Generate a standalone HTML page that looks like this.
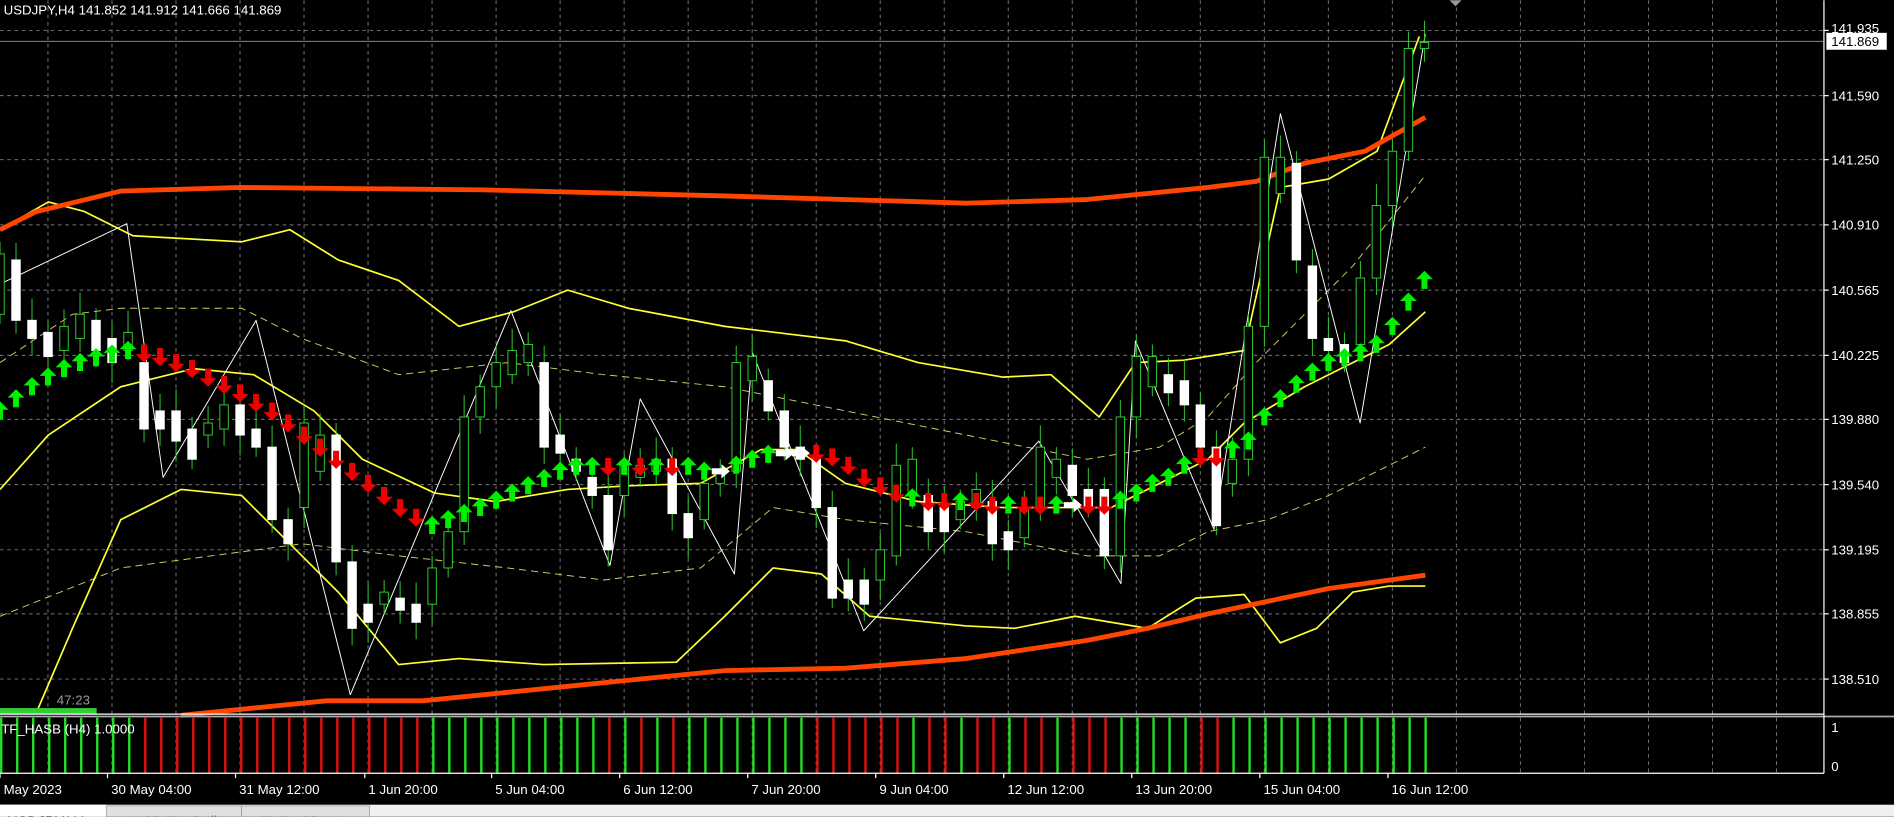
<!DOCTYPE html>
<html><head><meta charset="utf-8"><style>
html,body{margin:0;padding:0;background:#000;overflow:hidden;width:1894px;height:817px}
svg{display:block}
text{font-family:"Liberation Sans",Tahoma,sans-serif}
</style></head><body>
<svg id="s" width="1894" height="817" viewBox="0 0 1568 676" xmlns="http://www.w3.org/2000/svg">
<rect width="1568" height="676" fill="#000"/>
<g id="grid"></g>
<g id="lines"></g>
<g id="candles"></g>
<g id="arrows"></g>
<g id="ind"></g>
<g id="axis"></g>
</svg>
<script>
const NS="http://www.w3.org/2000/svg";
function el(p,t,a,txt){const e=document.createElementNS(NS,t);for(const k in a)e.setAttribute(k,a[k]);if(txt!==undefined)e.textContent=txt;document.getElementById(p).appendChild(e);return e;}
for(let x=39.7;x<1510;x+=53){el('grid','line',{x1:x,y1:0,x2:x,y2:591,stroke:'#777','stroke-width':0.8,'stroke-dasharray':'3,3'});el('grid','line',{x1:x,y1:594,x2:x,y2:640,stroke:'#777','stroke-width':0.8,'stroke-dasharray':'3,3'});}
const levels=[["141.935",25],["141.590",79],["141.250",132],["140.910",186],["140.565",240],["140.225",294],["139.880",347],["139.540",401],["139.195",455],["138.855",508],["138.510",562]];
levels.forEach(l=>{el('grid','line',{x1:0,y1:l[1],x2:1510,y2:l[1],stroke:'#777','stroke-width':0.8,'stroke-dasharray':'3,3'});});
function pl(pts,col,w,dash){const a={points:pts.map(p=>p.join(',')).join(' '),fill:'none',stroke:col,'stroke-width':w,'stroke-linejoin':'round'};if(dash)a['stroke-dasharray']=dash;el('lines','polyline',a);}
pl([[0,300],[60,260],[100,255],[200,255],[250,280],[330,310],[420,300],[500,310],[600,320],[700,340],[800,360],[900,380],[960,370],[1000,345],[1040,300],[1080,260],[1120,220],[1180,145]],'#cccc66',0.8,'6,4');
pl([[0,510],[100,470],[250,450],[330,460],[420,470],[500,480],[580,470],[640,420],[700,430],[800,440],[900,460],[960,460],[1000,440],[1050,430],[1100,410],[1180,370]],'#cccc66',0.8,'6,4');
pl([[0,190],[40,167],[70,175],[110,195],[200,200],[240,190],[280,215],[330,232],[380,270],[425,258],[470,240],[520,255],[600,270],[700,282],[760,300],[830,312],[870,310],[910,345],[940,300],[980,298],[1030,290],[1060,155],[1100,148],[1140,125],[1175,30]],'#ffff33',1.4);
pl([[30,590],[60,520],[100,430],[150,405],[200,410],[230,440],[280,490],[330,550],[380,545],[450,550],[560,548],[600,510],[640,470],[680,475],[720,510],[800,518],[840,520],[890,510],[950,520],[990,495],[1030,492],[1060,532],[1090,520],[1120,490],[1150,485],[1180,485]],'#ffff33',1.4);
pl([[0,405],[40,360],[100,320],[160,305],[210,310],[260,340],[300,380],[360,408],[410,415],[470,405],[520,402],[580,400],[630,372],[660,372],[700,400],[760,415],[830,420],[880,420],[920,420],[960,400],[1000,380],[1030,350],[1080,320],[1120,300],[1150,285],[1180,258]],'#ffff33',1.4);
pl([[0,190],[30,175],[100,158],[200,155],[400,157],[600,162],[800,168],[900,165],[1000,155],[1040,150],[1080,135],[1130,125],[1180,97]],'#ff4500',4);
pl([[150,592],[270,580],[350,580],[500,565],[600,555],[700,553],[800,545],[900,530],[950,520],[1000,508],[1100,487],[1180,476]],'#ff4500',4);
pl([[0,235],[105,185],[135,395],[212,265],[290,575],[423,257],[505,468],[530,330],[608,475],[623,292],[715,522],[860,365],[928,483],[940,282],[1005,438],[1060,94],[1126,350],[1180,28]],'#fff',0.8);
const C=[[210,260],[215,265],[265,280],[275,295],[270,290],[260,280],[265,290],[280,300],[275,290],[300,355],[340,355],[340,365],[355,380],[350,360],[335,355],[335,360],[355,370],[370,430],[430,450],[350,420],[360,390],[360,465],[465,520],[500,515],[490,500],[495,505],[500,515],[470,500],[440,470],[345,440],[320,345],[300,320],[290,310],[285,300],[300,370],[360,375],[380,390],[395,410],[410,455],[385,410],[385,395],[380,390],[380,425],[425,445],[400,430],[390,400],[300,390],[295,315],[315,340],[340,370],[370,380],[380,420],[420,495],[480,495],[480,500],[455,480],[385,460],[380,410],[410,440],[420,440],[415,430],[405,420],[415,450],[440,455],[420,445],[370,420],[380,395],[385,410],[405,420],[405,460],[345,460],[295,345],[295,320],[310,325],[315,335],[335,370],[370,435],[380,400],[270,380],[130,270],[130,160],[135,215],[220,280],[280,290],[285,300],[230,285],[170,230],[125,170],[40,125],[35,40]];
C.forEach((c,i)=>{const x=i*13.25;const pm=i>0?(C[i-1][0]+C[i-1][1])/2:999;const m=(c[0]+c[1])/2;const bear=m>pm;
el('candles','line',{x1:x,y1:c[0]-10-(i%3)*4,x2:x,y2:c[1]+8+(i%4)*3,stroke:'#33cc33','stroke-width':0.8});
el('candles','rect',{x:x-3.5,y:c[0],width:7,height:Math.max(1,c[1]-c[0]),fill:bear?'#fff':'#000',stroke:bear?'#fff':'#33cc33','stroke-width':0.8});});
const T=[];for(let i=0;i<90;i++){let g;if(i<=8)g=1;else if(i<=26)g=0;else if(i<=36)g=1;else if(i<=43)g=i%2;else if(i<=50)g=1;else if(i<=56)g=0;else if(i<=68)g=i%3?0:1;else if(i==69)g=0;else if(i<=74)g=1;else if(i<=76)g=0;else g=1;T.push(g);}
function up(x,y,c){el('arrows','path',{d:`M${x} ${y-8}L${x+7} ${y-1}L${x+2.5} ${y-1}L${x+2.5} ${y+7}L${x-2.5} ${y+7}L${x-2.5} ${y-1}L${x-7} ${y-1}Z`,fill:c});}
function dn(x,y,c){el('arrows','path',{d:`M${x} ${y+8}L${x+7} ${y+1}L${x+2.5} ${y+1}L${x+2.5} ${y-7}L${x-2.5} ${y-7}L${x-2.5} ${y+1}L${x-7} ${y+1}Z`,fill:c});}
function rt(x,y){el('arrows','path',{d:`M${x+8} ${y}L${x+1} ${y-6}L${x+1} ${y-2.5}L${x-7} ${y-2.5}L${x-7} ${y+2.5}L${x+1} ${y+2.5}L${x+1} ${y+6}Z`,fill:'#fff'});}
const AY=[340,330,320,312,305,300,296,293,290,292,295,300,305,312,318,325,333,340,350,360,370,380,390,400,410,420,428,435,430,425,420,414,408,402,396,390,386,386,386,386,386,386,386,386,390,390,385,380,376,375,375,375,378,385,395,402,408,412,415,415,415,415,418,418,418,418,418,418,418,418,414,408,400,395,385,378,378,372,365,345,330,318,308,300,296,292,285,270,250,232,208];
for(let i=0;i<90;i++){const x=i*13.25,y=AY[i];if(i==45||i==49||i==50||i==67)rt(x,y);else if(T[i])up(x,y,'#00ee00');else dn(x,y,'#ee0000');}
el('ind','rect',{x:0,y:586,width:80,height:5,fill:'#33cc33'});
el('ind','text',{x:47,y:583,fill:'#999','font-size':11},'47:23');
el('ind','line',{x1:0,y1:591,x2:1510,y2:591,stroke:'#fff','stroke-width':1});
el('ind','line',{x1:0,y1:593,x2:1568,y2:593,stroke:'#aaa','stroke-width':1.5});
for(let i=0;i<90;i++)el('ind','rect',{x:i*13.25,y:594,width:2,height:46,fill:T[i]?'#22dd22':'#dd1111'});
el('ind','text',{x:1,y:607,fill:'#fff','font-size':11},'TF_HASB (H4) 1.0000');
el('axis','line',{x1:1510,y1:0,x2:1510,y2:640,stroke:'#fff','stroke-width':1});
el('axis','line',{x1:0,y1:640,x2:1510,y2:640,stroke:'#fff','stroke-width':1});
levels.forEach(l=>{el('axis','line',{x1:1510,y1:l[1],x2:1514,y2:l[1],stroke:'#fff'});if(l[0]!="141.935")el('axis','text',{x:1516,y:l[1]+4,fill:'#fff','font-size':11},l[0]);});
el('axis','text',{x:1516,y:27,fill:'#fff','font-size':11},'141.935');
el('axis','line',{x1:0,y1:34,x2:1510,y2:34,stroke:'#999','stroke-width':0.8});
el('axis','rect',{x:1512,y:27,width:50,height:14,fill:'#fff'});
el('axis','text',{x:1516,y:38,fill:'#000','font-size':11},'141.869');
el('axis','text',{x:1516,y:606,fill:'#fff','font-size':11},'1');
el('axis','text',{x:1516,y:638,fill:'#fff','font-size':11},'0');
el('axis','path',{d:'M1200 0L1210 0L1205 5Z',fill:'#999'});
el('axis','text',{x:3,y:12,fill:'#fff','font-size':11},'USDJPY,H4  141.852 141.912 141.666 141.869');
const TL=[["May 2023",3],["30 May 04:00",92],["31 May 12:00",198],["1 Jun 20:00",305],["5 Jun 04:00",410],["6 Jun 12:00",516],["7 Jun 20:00",622],["9 Jun 04:00",728],["12 Jun 12:00",834],["13 Jun 20:00",940],["15 Jun 04:00",1046],["16 Jun 12:00",1152]];
TL.forEach(t=>{el('axis','line',{x1:t[1]-3,y1:640,x2:t[1]-3,y2:644,stroke:'#fff'});el('axis','text',{x:t[1],y:657,fill:'#fff','font-size':11},t[0]);});
el('axis','rect',{x:0,y:666,width:1568,height:10,fill:'#f0f0f0'});
el('axis','rect',{x:0,y:666,width:88,height:10,fill:'#fff'});
el('axis','rect',{x:88,y:667,width:112,height:9,fill:'#e0e0e0',stroke:'#999','stroke-width':0.6});
el('axis','rect',{x:200,y:667,width:106,height:9,fill:'#e0e0e0',stroke:'#999','stroke-width':0.6});
el('axis','text',{x:6,y:684,fill:'#000','font-size':12},'USDJPY,H4');
el('axis','text',{x:110,y:684,fill:'#777','font-size':12},'USDJPY,Daily');
el('axis','text',{x:215,y:684,fill:'#777','font-size':12},'EURUSD,H4');
</script>
</body></html>
